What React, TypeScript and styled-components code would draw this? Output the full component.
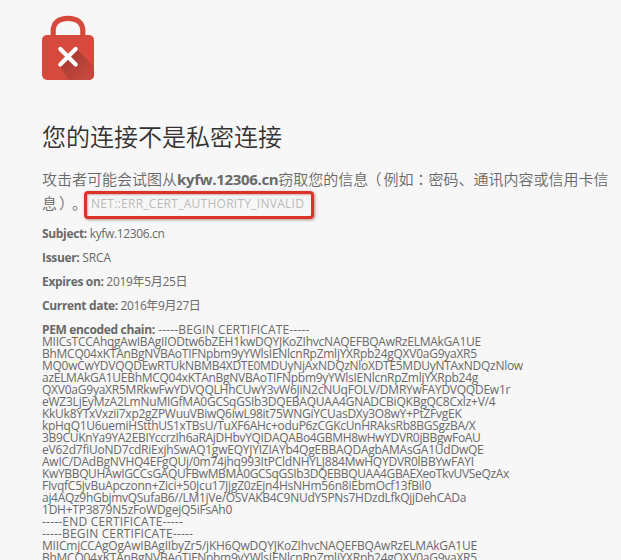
import React from "react";
import styled, { createGlobalStyle } from "styled-components";

const GlobalStyle = createGlobalStyle`
  * { box-sizing: border-box; }
  body {
    margin: 0;
    height: 560px;
    overflow: hidden;
    background: #f7f7f7;
    color: #696969;
    font-family: "Open Sans", "Noto Sans CJK SC", sans-serif;
  }
`;

const Page = styled.main`
  display: flex;
  flex-direction: column;
  align-items: flex-start;
  height: 560px;
  overflow: hidden;
  padding: 15px 0 0 42px;

  > * { flex-shrink: 0; }
`;

const LockIcon = styled.svg`
  display: block;
  width: 52px;
  height: 65px;
`;

const Title = styled.h1`
  margin: 41px 0 0;
  color: #333;
  font-size: 24px;
  font-weight: 350;
  line-height: 32px;
  white-space: nowrap;
`;

const Summary = styled.div`
  display: flex;
  flex-direction: column;
  margin-top: 14px;
  font-size: 15px;
  font-weight: 350;
  line-height: 24px;
  white-space: nowrap;
`;

const SummaryLine = styled.div`
  display: flex;
  align-items: center;
  height: 24px;
`;

const Domain = styled.strong`
  font-weight: 700;
  letter-spacing: -0.32px;
`;

/* Full-width punctuation drawn in the middle of its cell, nudged by $shift. */
const Centered = styled.span<{ $shift?: number }>`
  margin: 0 ${({ $shift = 0 }) => -$shift}px 0 ${({ $shift = 0 }) => $shift}px;
  font-family: "Noto Sans CJK TC", sans-serif;
`;

const ErrorBox = styled.span`
  display: flex;
  align-items: center;
  width: 230px;
  height: 28px;
  margin: 3px 0 -1px -3px;
  padding: 0 0 3px 4px;
  border: 3px solid #dc3329;
  border-radius: 4px;
  box-shadow: 1px 1px 3px rgba(120, 40, 30, 0.5), inset 1px 1px 2px rgba(120, 40, 30, 0.35);
`;

const ErrorCode = styled.span`
  color: #bababa;
  font-size: 12px;
  font-weight: 400;
  line-height: 16px;
  letter-spacing: 0.27px;
`;

const Details = styled.div`
  display: flex;
  flex-direction: column;
  gap: 12px;
  margin-top: 13px;
  font-size: 12px;
  font-weight: 400;
  line-height: 12px;
  white-space: nowrap;
`;

const Line = styled.div<{ $tracking?: number }>`
  height: 12px;
  letter-spacing: ${({ $tracking = 0 }) => $tracking}px;
`;

const Label = styled.strong`
  font-weight: 700;
  letter-spacing: -0.34px;
`;

const details: [string, string, number][] = [
  ["Subject:", "kyfw.12306.cn", -0.36],
  ["Issuer:", "SRCA", -0.15],
  ["Expires on:", "2019年5月25日", -0.32],
  ["Current date:", "2016年9月27日", -0.42],
];

const pem: [string, number][] = [
  ["MIICsTCCAhqgAwIBAgIIODtw6bZEH1kwDQYJKoZIhvcNAQEFBQAwRzELMAkGA1UE", -0.245],
  ["BhMCQ04xKTAnBgNVBAoTIFNpbm9yYWlsIENlcnRpZmljYXRpb24gQXV0aG9yaXR5", -0.26],
  ["MQ0wCwYDVQQDEwRTUkNBMB4XDTE0MDUyNjAxNDQzNloXDTE5MDUyNTAxNDQzNlow", -0.285],
  ["azELMAkGA1UEBhMCQ04xKTAnBgNVBAoTIFNpbm9yYWlsIENlcnRpZmljYXRpb24g", -0.275],
  ["QXV0aG9yaXR5MRkwFwYDVQQLHhCUwY3vW6JiN2cNUqFOLV/DMRYwFAYDVQQDEw1r", -0.235],
  ["eWZ3LjEyMzA2LmNuMIGfMA0GCSqGSIb3DQEBAQUAA4GNADCBiQKBgQC8Cxlz+V/4", -0.235],
  ["KkUk8YTxVxzii7xp2gZPWuuVBiwQ6iwL98it75WNGiYCUasDXy3O8wY+PtZFvgEK", -0.27],
  ["kpHqQ1U6uemiHStthUS1xTBsU/TuXF6AHc+oduP6zCGKcUnHRAksRb8BGSgzBA/X", -0.295],
  ["3B9CUKnYa9YA2EBIYccrzIh6aRAjDHbvYQIDAQABo4GBMH8wHwYDVR0jBBgwFoAU", -0.325],
  ["eV62d7fiUoND7cdRiExjhSwAQ1gwEQYJYIZIAYb4QgEBBAQDAgbAMAsGA1UdDwQE", -0.235],
  ["AwIC/DAdBgNVHQ4EFgQUj/0m74jhq993ItPCldNHYLJ884MwHQYDVR0lBBYwFAYI", -0.24],
  ["KwYBBQUHAwIGCCsGAQUFBwMBMA0GCSqGSIb3DQEBBQUAA4GBAEXeoTkvUVSeQzAx", -0.345],
  ["FIvqfC5jvBuApczonn+Zici+50Jcu17JjgZ0zEjn4HsNHm56n8iEbmOcf13fBil0", -0.22],
  ["aj4AQz9hGbjmvQSufaB6//LM1jVe/OSVAKB4C9NUdY5PNs7HDzdLfkQjjDehCADa", -0.29],
  ["1DH+TP3879N5zFoWDgejQ5iFsAh0", -0.23],
  ["-----END CERTIFICATE-----", 0.21],
  ["-----BEGIN CERTIFICATE-----", 0.155],
  ["MIICmjCCAgOgAwIBAgIIbyZr5/jKH6QwDQYJKoZIhvcNAQEFBQAwRzELMAkGA1UE", -0.205],
  ["BhMCQ04xKTAnBgNVBAoTIFNpbm9yYWlsIENlcnRpZmljYXRpb24gQXV0aG9yaXR5", -0.26],
];

export default function App() {
  return (
    <>
      <GlobalStyle />
      <Page>
        <LockIcon viewBox="0 0 52 65" aria-hidden="true">
          <defs>
            <clipPath id="lock-body">
              <rect y="20" width="52" height="45" rx="5" />
            </clipPath>
            <linearGradient id="lock-shade" x1="25" y1="40" x2="45" y2="62" gradientUnits="userSpaceOnUse">
              <stop offset="0" stopColor="#a63b32" />
              <stop offset="1" stopColor="#c6483d" />
            </linearGradient>
          </defs>
          <path d="M11.2 25V16C11.2 7.5 17 3.3 26 3.3S40.8 7.5 40.8 16v9" fill="none" stroke="#d64a3e" strokeWidth="5.2" />
          <rect y="20" width="52" height="45" rx="5" fill="#d64a3e" />
          <g clipPath="url(#lock-body)">
            <path d="M34 33.5 60 59.5V80H36L17.5 50.5Z" fill="url(#lock-shade)" />
          </g>
          <path d="m18.3 34 15.4 15.6M33.7 34 18.3 49.6" stroke="#fff" strokeWidth="4.2" strokeLinecap="round" />
        </LockIcon>

        <Title>您的连接不是私密连接</Title>

        <Summary>
          <SummaryLine>
            <span>攻击者可能会试图从</span>
            <Domain>kyfw.12306.cn</Domain>
            <span>窃取您的信息</span>
            <Centered $shift={-2}>（</Centered>
            <span>例如</span>
            <Centered>：</Centered>
            <span>密码、通讯内容或信用卡信</span>
          </SummaryLine>
          <SummaryLine>
            <span>息</span>
            <Centered $shift={2}>）</Centered>
            <span>。</span>
            <ErrorBox>
              <ErrorCode>NET::ERR_CERT_AUTHORITY_INVALID</ErrorCode>
            </ErrorBox>
          </SummaryLine>
        </Summary>

        <Details>
          {details.map(([label, value, tracking]) => (
            <Line key={label} $tracking={tracking}>
              <Label>{label}</Label> <span>{value}</span>
            </Line>
          ))}
          <div>
            <Line $tracking={0.17}>
              <Label>PEM encoded chain:</Label> <span>-----BEGIN CERTIFICATE-----</span>
            </Line>
            {pem.map(([text, tracking], index) => (
              <Line key={index} $tracking={tracking}>
                {text}
              </Line>
            ))}
          </div>
        </Details>
      </Page>
    </>
  );
}
